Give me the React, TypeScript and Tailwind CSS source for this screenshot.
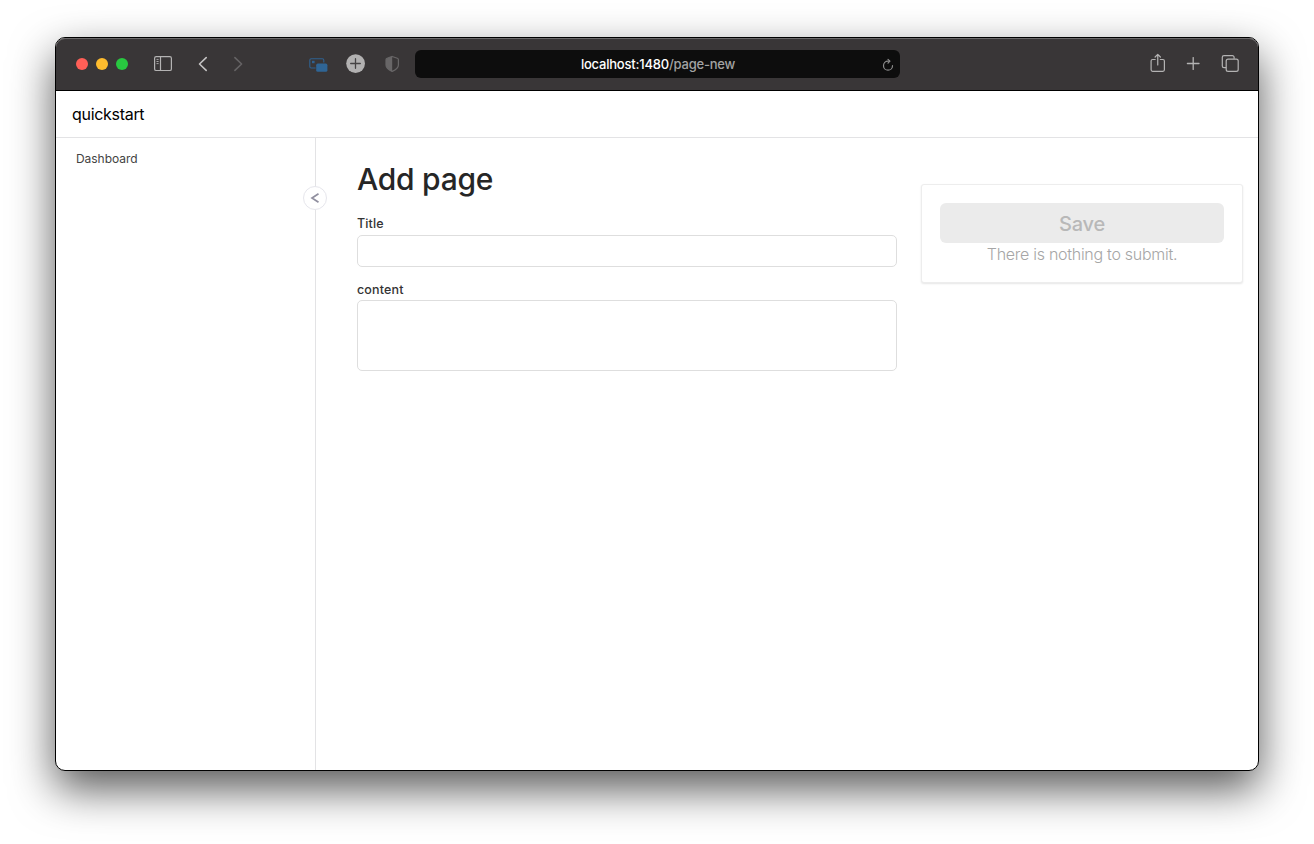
import React from "react";

function Toolbar() {
  return (
    <header className="flex h-[53px] shrink-0 items-center rounded-t-[9px] border-b border-black bg-[#393637] pr-[18px] pl-5 text-[#b4b3b3] shadow-[inset_0_1px_0_#6b696a]">
      <div className="flex gap-2">
        <span className="size-3 rounded-full bg-[#ff5f57]" />
        <span className="size-3 rounded-full bg-[#febc2e]" />
        <span className="size-3 rounded-full bg-[#28c840]" />
      </div>
      <svg className="-mt-px ml-[26px]" width="18" height="16" viewBox="0 0 18 16" fill="none" stroke="currentColor" strokeWidth="1.2">
        <rect x="0.6" y="0.6" width="16.8" height="13.9" rx="1.6" />
        <path d="M6.5 0.7v13.8" />
        <path d="M2.5 3.4h2.1M2.5 5.500h2.1M2.5 7.600h2.1" strokeWidth="0.9" />
      </svg>
      <svg className="ml-[26px]" width="10" height="16" viewBox="0 0 10 16" fill="none" stroke="#c4c3c3" strokeWidth="1.6" strokeLinecap="round" strokeLinejoin="round">
        <path d="M8.2 1.6 1.5 8l6.7 6.4" />
      </svg>
      <svg className="ml-[25px]" width="10" height="16" viewBox="0 0 10 16" fill="none" stroke="#656364" strokeWidth="1.6" strokeLinecap="round" strokeLinejoin="round">
        <path d="M1.9 1.6 8.6 8l-6.7 6.4" />
      </svg>
      <svg className="mt-[2px] ml-[66px]" width="19" height="15" viewBox="0 0 19 15" fill="none" stroke="#2f6190" strokeWidth="1.1">
        <path d="M6.6 10H2.2A1.4 1.400 0 0 1 .8 8.600V2.200A1.400 1.400 0 0 1 2.200.8h11.200a1.400 1.400 0 0 1 1.400 1.400v2.400" />
        <rect x="3" y="2.800" width="2.600" height="2.400" fill="#2f6190" stroke="none" />
        <rect x="7.200" y="5.600" width="11.200" height="8.200" rx="1.600" fill="#2f6595" stroke="none" />
      </svg>
      <svg className="ml-[18px]" width="20" height="20" viewBox="0 0 20 20">
        <circle cx="9.600" cy="9.600" r="9.400" fill="#b2b1b1" />
        <path d="M9.500 4.700v9.600M4.700 9.500h9.600" stroke="#454344" strokeWidth="1.300" strokeLinecap="round" />
      </svg>
      <svg className="ml-[18px]" width="16" height="18" viewBox="0 0 16 18" fill="none">
        <path d="M8.200 1.500 13.300 3.200q1.100.4 1.100 1.500v5.200c0 2.800-2.800 4.900-6.200 6.500C4.800 14.800 2 12.700 2 9.900V4.700q0-1.100 1.100-1.500Z" stroke="#686667" strokeWidth="1.200" />
        <path d="M8.200 1.500v14.900C4.800 14.800 2 12.700 2 9.900V4.700q0-1.100 1.100-1.500Z" fill="#686667" />
      </svg>
      <div className="ml-[15px] grid h-7 w-[485px] grid-cols-[1fr_auto_1fr] items-center rounded-md bg-[#0d0d0d] pr-[6px] pl-[7px] text-[13px] leading-4">
        <span />
        <p className="font-medium tracking-[-0.21px] text-[#a3a3a3]">
          <span className="text-white">localhost:1480</span>/page-new
        </p>
        <svg className="mt-[2px] justify-self-end" width="13" height="14" viewBox="0 0 13 14" fill="none" stroke="#8d8d8d" strokeWidth="1.200" strokeLinecap="round" strokeLinejoin="round">
          <path d="M11.500 7.700A4.500 4.500 0 1 1 7 3.200h1.600" />
          <path d="M7 1.300 8.900 3.200 7 5.100" />
        </svg>
      </div>
      <svg className="-mt-[2px] ml-auto" width="17" height="20" viewBox="0 0 17 20" fill="none" stroke="currentColor" strokeWidth="1.200" strokeLinecap="round" strokeLinejoin="round">
        <path d="M6.200 6.500H3.600A1.500 1.500 0 0 0 2.100 8v8.800a1.500 1.500 0 0 0 1.500 1.500h10.300a1.500 1.500 0 0 0 1.500-1.500V8a1.500 1.500 0 0 0-1.500-1.500h-2.600" />
        <path d="M8.750 12V1.500M6.100 4l2.650-2.600L11.400 4" />
      </svg>
      <svg className="-mt-px ml-5" width="14" height="14" viewBox="0 0 14 14" stroke="currentColor" strokeWidth="1.300" strokeLinecap="round">
        <path d="M7.200.6v11.800M1.400 6.500h11.600" />
      </svg>
      <svg className="-mt-px ml-[21px]" width="19" height="18" viewBox="0 0 19 18" fill="none" stroke="currentColor" strokeWidth="1.200">
        <path d="M5.200 12.600H3a1.700 1.700 0 0 1-1.700-1.700V2.300A1.700 1.700 0 0 1 3 .6h8.400a1.700 1.700 0 0 1 1.700 1.700v1.500" />
        <rect x="5.200" y="4.100" width="12" height="12.200" rx="1.900" />
      </svg>
    </header>
  );
}

function Sidebar() {
  return (
    <nav className="relative w-[260px] shrink-0 border-r border-[#e3e3e5] px-5 pt-[11px]">
      <a className="block text-[12px] leading-5 tracking-[-0.05px] text-[#434343]">Dashboard</a>
      <button aria-label="Collapse" className="absolute top-12 -right-3 grid size-6 place-items-center rounded-full border border-[#e6e6ec] bg-white">
        <svg width="10" height="12" viewBox="0 0 10 12" fill="none" stroke="#908f9f" strokeWidth="1.700">
          <path d="M8.500 1.700 2 6l6.500 4.300" />
        </svg>
      </button>
    </nav>
  );
}

function PageForm() {
  return (
    <section className="ml-[41px] w-[540px] pt-[22px]">
      <h1 className="text-[30px] leading-[38px] font-medium tracking-[-0.25px] text-[#262626]">Add page</h1>
      <label className="mt-4 block text-[12.500px] leading-5 font-medium tracking-[0.1px] text-[#343434]">Title</label>
      <input className="mt-px block h-8 w-full rounded-[5px] border border-[#dedede] bg-white" />
      <label className="mt-[13px] block text-[12.500px] leading-5 font-medium tracking-[0.15px] text-[#343434]">content</label>
      <textarea className="block h-[71px] w-full resize-none rounded-[5px] border border-[#dedede] bg-white" />
    </section>
  );
}

function SaveCard() {
  return (
    <aside className="mt-[46px] ml-6 h-[99px] w-[322px] rounded-[3px] border border-[#ededed] bg-white px-[18px] pt-[18px] text-center shadow-[0_1px_2px_rgba(0,0,0,0.1)]">
      <button disabled className="block h-10 w-full rounded-[6px] bg-[#ebebeb] pt-px text-[20px] leading-10 font-medium tracking-[-0.25px] text-[#b8b8b8]">Save</button>
      <p className="-mt-px text-[16px] leading-6 font-light tracking-[-0.28px] text-[#a6a6a6]">There is nothing to submit.</p>
    </aside>
  );
}

export default function App() {
  return (
    <div className="h-[844px] w-[1314px] overflow-hidden bg-white px-[55px] pt-[37px] font-['Inter','Liberation_Sans',sans-serif]">
      <div className="flex h-[734px] w-[1204px] flex-col rounded-[10px] border border-black bg-white shadow-[0_18px_44px_rgba(0,0,0,0.66)]">
        <Toolbar />
        <div className="flex h-[47px] shrink-0 items-center border-b border-[#e3e3e5] px-4 text-[16px] tracking-[-0.3px] text-black">quickstart</div>
        <main className="flex min-h-0 flex-1">
          <Sidebar />
          <PageForm />
          <SaveCard />
        </main>
      </div>
    </div>
  );
}
